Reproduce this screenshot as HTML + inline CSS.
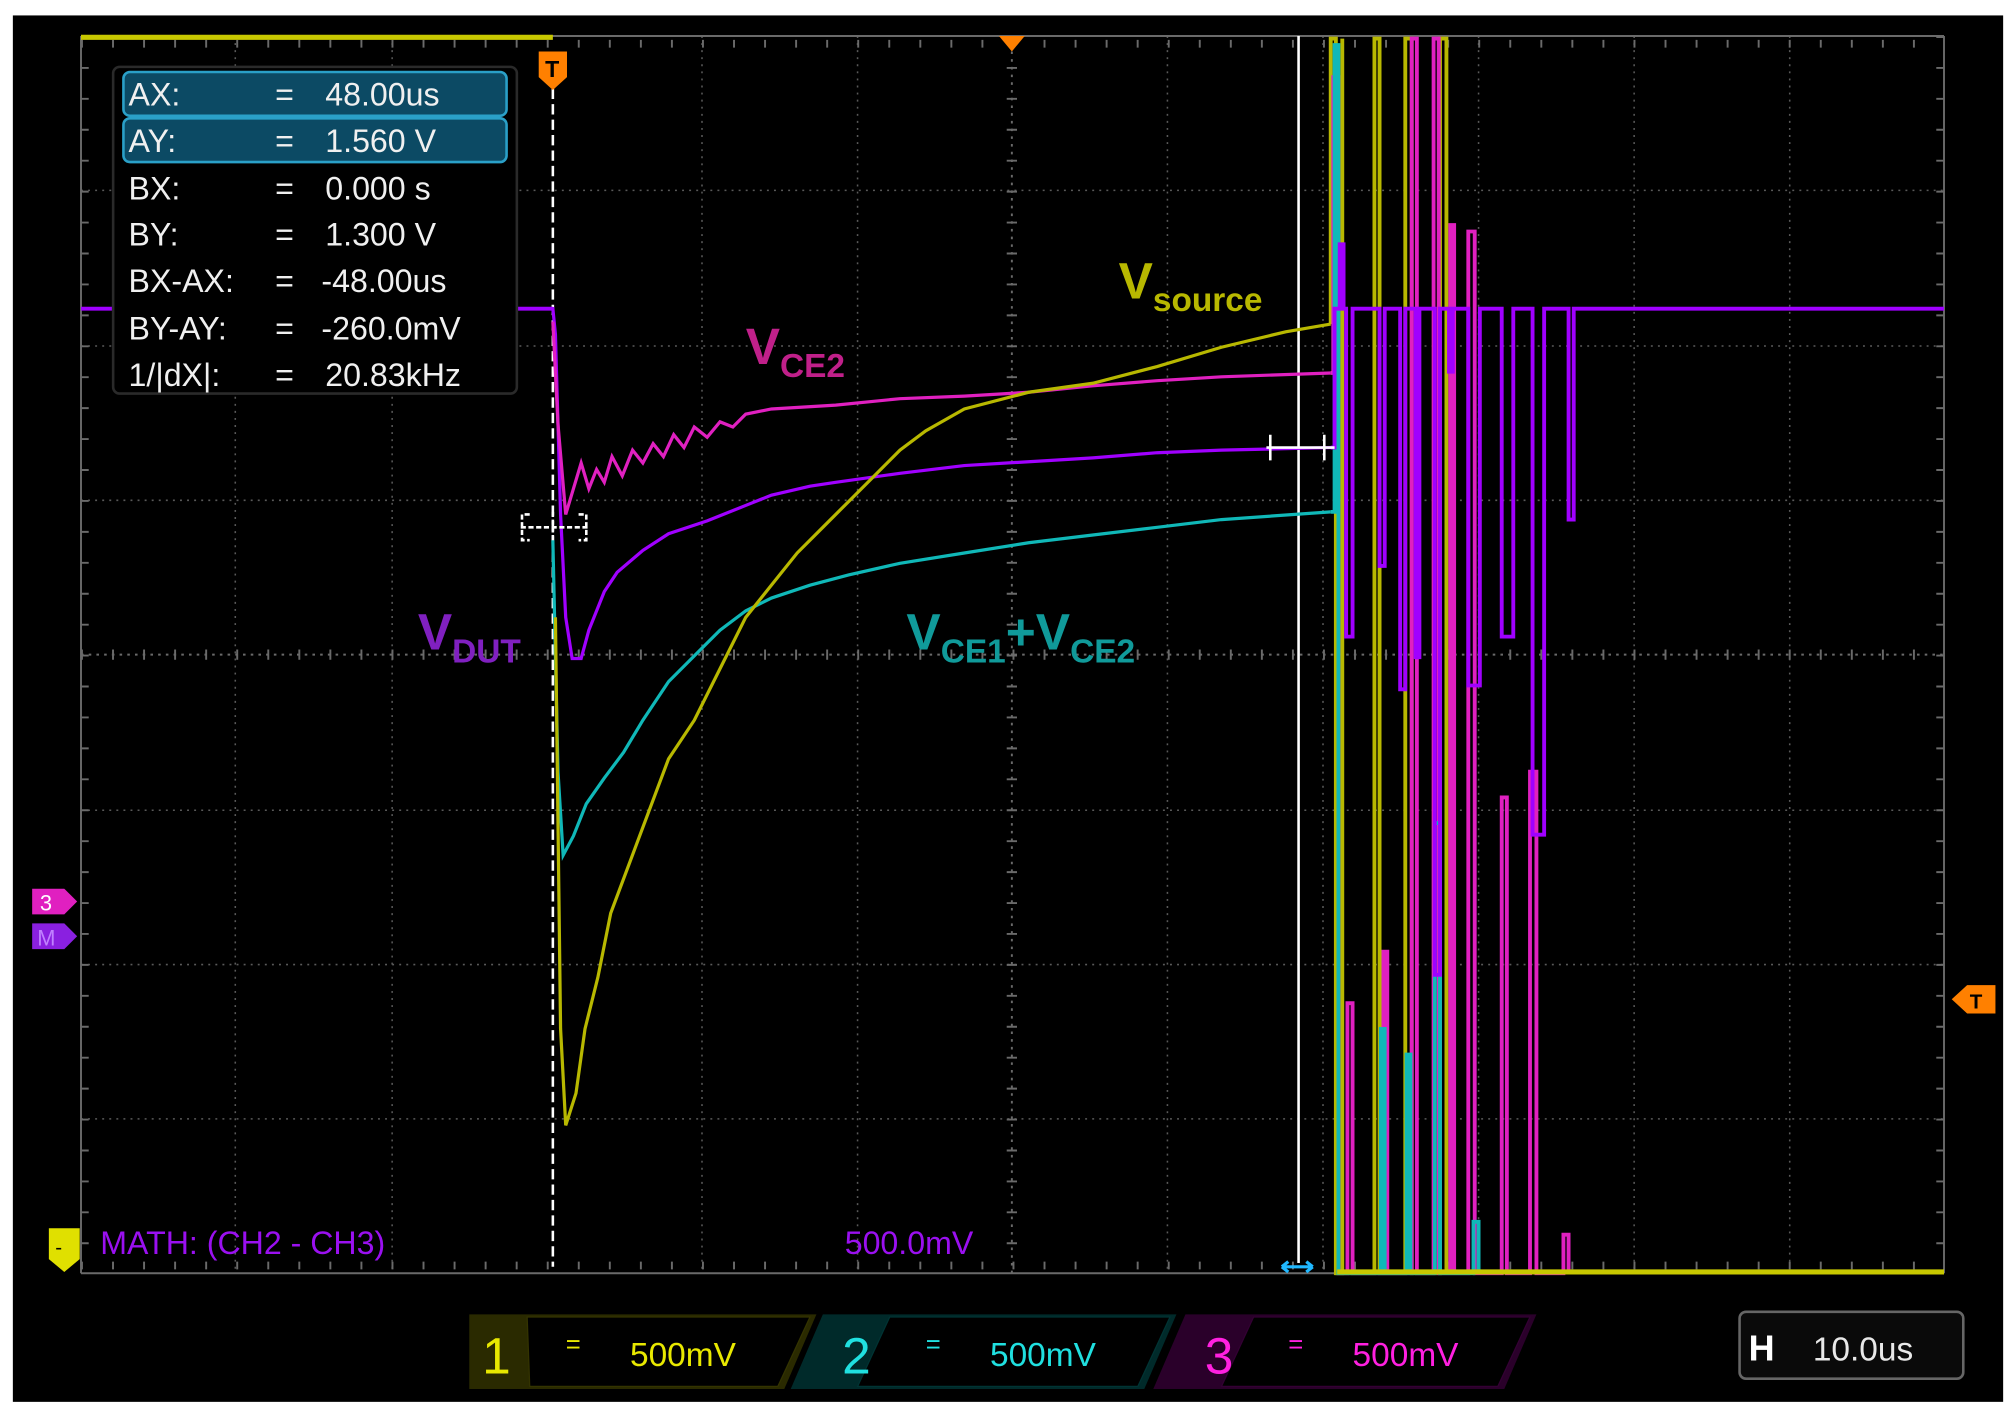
<!DOCTYPE html>
<html><head><meta charset="utf-8"><style>
html,body{margin:0;padding:0;background:#fff;width:2016px;height:1416px;overflow:hidden}
svg{display:block}
text{font-family:"Liberation Sans",sans-serif}
</style></head><body>
<svg width="2016" height="1416" viewBox="0 0 1568 1101" preserveAspectRatio="none">
<rect x="10" y="12" width="1548" height="1078" fill="#000"/>
<g stroke="#5a5a5a" stroke-width="1.2" stroke-dasharray="1.5 4">
<line x1="183" y1="28" x2="183" y2="990"/><line x1="305" y1="28" x2="305" y2="990"/>
<line x1="546" y1="28" x2="546" y2="990"/><line x1="667" y1="28" x2="667" y2="990"/>
<line x1="908" y1="28" x2="908" y2="990"/><line x1="1029" y1="28" x2="1029" y2="990"/>
<line x1="1150" y1="28" x2="1150" y2="990"/><line x1="1271" y1="28" x2="1271" y2="990"/><line x1="1392" y1="28" x2="1392" y2="990"/>
<line x1="63" y1="148" x2="1512" y2="148"/><line x1="63" y1="269" x2="1512" y2="269"/>
<line x1="63" y1="389" x2="1512" y2="389"/><line x1="63" y1="630" x2="1512" y2="630"/>
<line x1="63" y1="750" x2="1512" y2="750"/><line x1="63" y1="870" x2="1512" y2="870"/>
</g>
<g stroke="#6a6a6a" stroke-width="1.5">
<line x1="787" y1="28" x2="787" y2="990" stroke-dasharray="2 4"/>
<line x1="63" y1="509" x2="1512" y2="509" stroke-dasharray="2 4"/>
<line x1="63" y1="28" x2="63" y2="990"/><line x1="1512" y1="28" x2="1512" y2="990"/>
<line x1="63" y1="990" x2="1512" y2="990"/><line x1="63" y1="28" x2="1512" y2="28"/>
<line x1="63" y1="984" x2="1512" y2="984" stroke-dasharray="1.5 22.65" stroke-width="6"/>
<line x1="63" y1="34" x2="1512" y2="34" stroke-dasharray="1.5 22.65" stroke-width="6"/>
<line x1="66" y1="28" x2="66" y2="990" stroke-dasharray="1.5 22.55" stroke-width="6"/>
<line x1="1509" y1="28" x2="1509" y2="990" stroke-dasharray="1.5 22.55" stroke-width="6"/>
<line x1="63" y1="509" x2="1512" y2="509" stroke-dasharray="1.5 22.65" stroke-width="8"/>
<line x1="787" y1="28" x2="787" y2="990" stroke-dasharray="1.5 22.55" stroke-width="8"/>
</g>
<line x1="63" y1="29" x2="430" y2="29" stroke="#c8c800" stroke-width="4"/>
<line x1="430" y1="45" x2="430" y2="985" stroke="#fff" stroke-width="2" stroke-dasharray="8 4"/>
<line x1="1010" y1="28" x2="1010" y2="982" stroke="#fff" stroke-width="2"/>
<polyline fill="none" stroke="#a000ff" stroke-width="2.5" points="63,240 430,240 432,260 436,400 440,480 445,512 452,512 458,490 470,460 480,445 500,428 520,415 550,405 580,393 600,385 630,378 650,375 700,368 750,362 800,359 850,356 900,352 950,350 1035,348"/>
<polyline fill="none" stroke="#e020c0" stroke-width="2.5" points="430,250 434,330 440,400 446,380 452,360 458,380 464,365 470,375 476,355 484,370 492,350 500,360 508,345 516,355 524,338 532,348 540,332 550,340 560,328 570,332 580,322 600,318 650,315 700,310 750,308 800,305 850,300 900,296 950,293 1035,290"/>
<polyline fill="none" stroke="#10b8b8" stroke-width="2.5" points="430,420 434,600 438,665 446,650 456,625 470,605 485,585 500,560 520,530 540,510 560,490 580,475 600,465 630,455 660,447 700,438 750,430 800,422 850,416 900,410 950,404 1035,398"/>
<polyline fill="none" stroke="#b8b800" stroke-width="2.5" points="432,480 436,800 440,875 448,850 455,800 465,760 475,710 490,670 505,630 520,590 540,560 560,520 580,480 600,455 620,430 640,410 660,390 680,370 700,350 720,335 750,318 800,305 850,298 900,285 950,270 1000,258 1035,252"/>
<g fill="none" stroke-width="3">
<polyline stroke="#b8b800" points="1035,252 1035,30 1039,30 1039,990 1069,990 1069,30 1073,30 1073,990 1093,990 1093,30 1098,30 1098,990 1120,990 1120,30 1125,30 1125,990"/>
<polyline stroke="#b8b800" points="1038,290 1040,290 1040,990 1044,990 1044,30"/>
<polyline stroke="#e020c0" points="1035,290 1037,290 1037,60 1041,60 1041,990 1048,990 1048,780 1052,780 1052,990 1076,990 1076,740 1079,740 1079,990 1098,990 1098,30 1102,30 1102,990 1115,990 1115,30 1119,30 1119,990 1128,990 1128,175 1131,175 1131,990 1142,990 1142,180 1147,180 1147,990 1168,990 1168,620 1172,620 1172,990 1190,990 1190,600 1195,600 1195,990 1216,990 1216,960 1220,960 1220,990"/>
<polyline stroke="#10b8b8" points="1035,398 1038,398 1038,35 1041,35 1041,990 1074,990 1074,800 1077,800 1077,990 1094,990 1094,820 1097,820 1097,990 1116,990 1116,640 1120,640 1120,990 1146,990 1146,950 1150,950 1150,990"/>
<polyline stroke="#a000ff" points="1035,348 1038,348 1038,240 1042,240 1042,190 1045,190 1045,240 1047,240 1047,495 1052,495 1052,240 1073,240 1073,440 1077,440 1077,240 1089,240 1089,536 1093,536 1093,240 1101,240 1101,511 1104,511 1104,240 1116,240 1116,758 1120,758 1120,240 1127,240 1127,289 1130,289 1130,240 1142,240 1142,533 1151,533 1151,240 1168,240 1168,495 1177,495 1177,240 1192,240 1192,649 1201,649 1201,240 1220,240 1220,404 1224,404 1224,240 1512,240"/>
</g>
<line x1="63" y1="240" x2="88" y2="240" stroke="#a000ff" stroke-width="3"/>
<line x1="402" y1="240" x2="430" y2="240" stroke="#a000ff" stroke-width="3"/>
<line x1="1040" y1="989" x2="1512" y2="989" stroke="#c8c800" stroke-width="4"/>
<g stroke="#fff" stroke-width="2" fill="none">
<path d="M405,410 H458 M430,398 V422 M412,400 h-6 v20 h6 M450,400 h6 v20 h-6" stroke-dasharray="4 2"/>
<path d="M985,348 H1038 M988,338 v20 M1030,338 v20"/>
</g>
<rect x="88" y="52" width="314" height="254" rx="5" fill="#000" stroke="#2a2a2a" stroke-width="2"/>
<rect x="96" y="56" width="298" height="34" rx="5" fill="#0c4a64" stroke="#2aa0c8" stroke-width="2"/>
<rect x="96" y="92" width="298" height="34" rx="5" fill="#0c4a64" stroke="#2aa0c8" stroke-width="2"/>
<g fill="#f0f0f0" font-size="25">
<text x="100" y="82">AX:</text><text x="214" y="82">=</text><text x="253" y="82">48.00us</text>
<text x="100" y="118">AY:</text><text x="214" y="118">=</text><text x="253" y="118">1.560 V</text>
<text x="100" y="155">BX:</text><text x="214" y="155">=</text><text x="253" y="155">0.000 s</text>
<text x="100" y="191">BY:</text><text x="214" y="191">=</text><text x="253" y="191">1.300 V</text>
<text x="100" y="227">BX-AX:</text><text x="214" y="227">=</text><text x="250" y="227">-48.00us</text>
<text x="100" y="264">BY-AY:</text><text x="214" y="264">=</text><text x="250" y="264">-260.0mV</text>
<text x="100" y="300">1/|dX|:</text><text x="214" y="300">=</text><text x="253" y="300">20.83kHz</text>
</g>
<path d="M419,40 h22 v20 l-11,10 l-11,-10z" fill="#ff8000"/>
<text x="424" y="60" font-size="18" font-weight="bold" fill="#000">T</text>
<path d="M777,28 h20 l-10,12z" fill="#ff8000"/>
<path d="M1518,777 l12,-11 h22 v22 h-22z" fill="#ff8000"/>
<text x="1532" y="784" font-size="16" font-weight="bold" fill="#000">T</text>
<path d="M25,691 h25 l10,10 l-10,10 h-25z" fill="#e020c0"/>
<text x="31" y="708" font-size="17" fill="#fff">3</text>
<path d="M25,718 h25 l10,10 l-10,10 h-25z" fill="#8a20e0"/>
<text x="29" y="735" font-size="17" fill="#c080ff">M</text>
<path d="M38,955 h24 v24 l-12,10 l-12,-10z" fill="#e0e000"/>
<text x="43" y="975" font-size="16" fill="#000">-</text>
<g font-weight="bold">
<text x="870" y="232" font-size="40" fill="#b8b800">V<tspan font-size="26" dy="10">source</tspan></text>
<text x="580" y="283" font-size="40" fill="#c0208a">V<tspan font-size="26" dy="10">CE2</tspan></text>
<text x="325" y="505" font-size="40" fill="#8020c0">V<tspan font-size="26" dy="10">DUT</tspan></text>
<text x="705" y="505" font-size="40" fill="#109a9a">V<tspan font-size="26" dy="10">CE1</tspan><tspan dy="-10">+V</tspan><tspan font-size="26" dy="10">CE2</tspan></text>
</g>
<text x="78" y="975" font-size="25" fill="#9a10f0">MATH: (CH2 - CH3)</text>
<text x="657" y="975" font-size="25" fill="#9a10f0">500.0mV</text>
<path d="M997,985 h24 M997,985 l5,-4 M997,985 l5,4 M1021,985 l-5,-4 M1021,985 l-5,4" stroke="#20b8ff" stroke-width="2.5" fill="none"/>
<path d="M365,1022 H635 L610,1080 H365z" fill="#2a2a00"/>
<path d="M410,1024 H630 L605,1078 H412z" fill="#000" stroke="#333300"/>
<text x="375" y="1068" font-size="40" fill="#e8e800">1</text>
<text x="440" y="1052" font-size="20" fill="#e8e800">=</text>
<text x="490" y="1062" font-size="26" fill="#e8e800">500mV</text>
<path d="M640,1022 H915 L890,1080 H615z" fill="#002a2a"/>
<path d="M692,1024 H910 L885,1078 H667z" fill="#000" stroke="#003333"/>
<text x="655" y="1068" font-size="40" fill="#20e0e0">2</text>
<text x="720" y="1052" font-size="20" fill="#20e0e0">=</text>
<text x="770" y="1062" font-size="26" fill="#20e0e0">500mV</text>
<path d="M922,1022 H1195 L1170,1080 H897z" fill="#2a002a"/>
<path d="M975,1024 H1190 L1165,1078 H950z" fill="#000" stroke="#330033"/>
<text x="937" y="1068" font-size="40" fill="#ff20e0">3</text>
<text x="1002" y="1052" font-size="20" fill="#ff20e0">=</text>
<text x="1052" y="1062" font-size="26" fill="#ff20e0">500mV</text>
<rect x="1353" y="1020" width="174" height="52" rx="5" fill="#0a0a0a" stroke="#666" stroke-width="2"/>
<text x="1360" y="1058" font-size="28" font-weight="bold" fill="#fff">H</text>
<text x="1410" y="1058" font-size="26" fill="#e8e8e8">10.0us</text>
</svg>
</body></html>
